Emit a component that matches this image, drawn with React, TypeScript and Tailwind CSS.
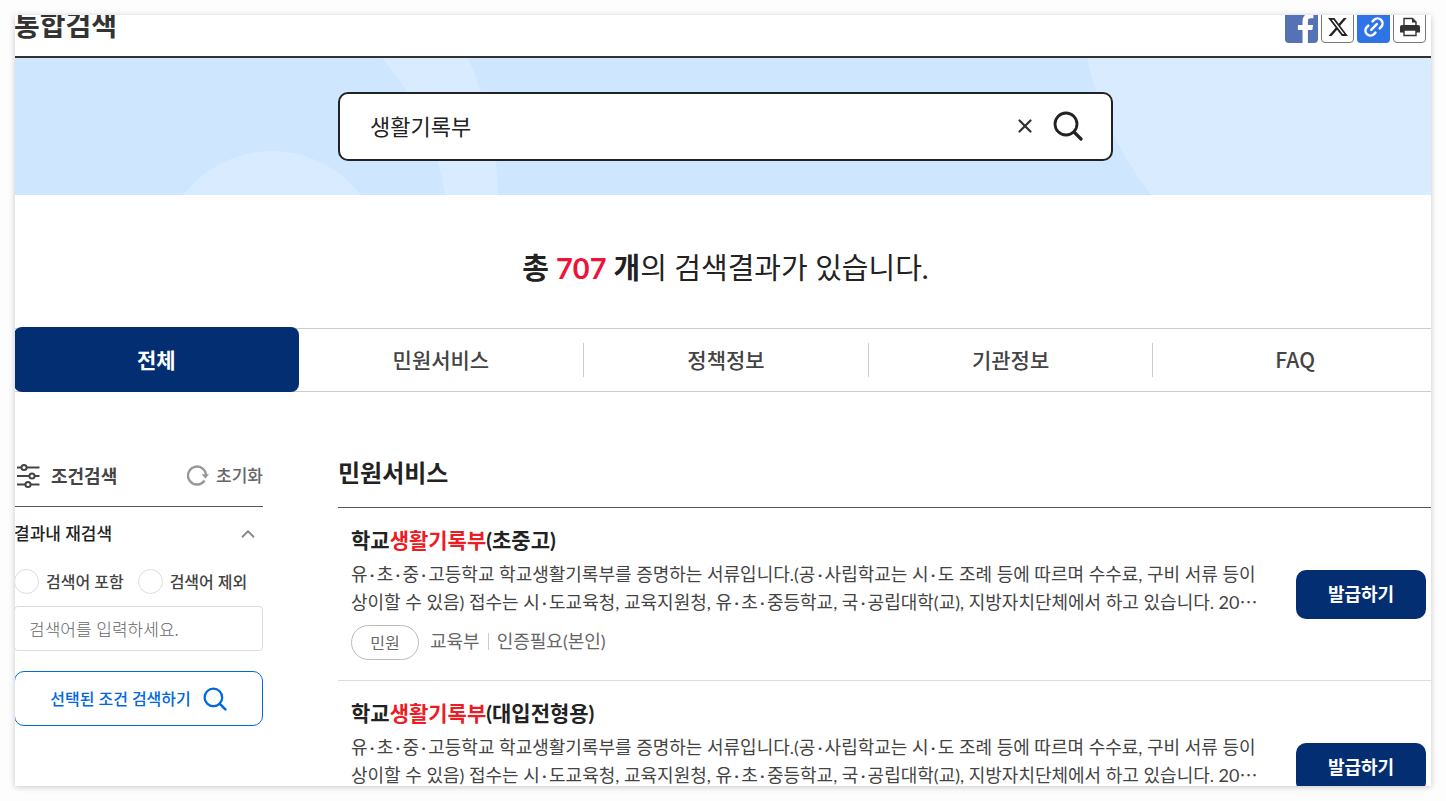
import React, { useState } from 'react';
import { ChevronUp, Link2, X } from 'lucide-react';
import { FaXTwitter } from 'react-icons/fa6';

interface ServiceItem {
  id: string;
  prefix: string;
  keyword: string;
  suffix: string;
  description: string;
  category: string;
  agency: string;
  auth: string;
}

const DESCRIPTION =
  '유·초·중·고등학교 학교생활기록부를 증명하는 서류입니다.(공·사립학교는 시·도 조례 등에 따르며 수수료, 구비 서류 등이 상이할 수 있음) 접수는 시·도교육청, 교육지원청, 유·초·중등학교, 국·공립대학(교), 지방자치단체에서 하고 있습니다. 20⋯';

const SERVICES: ServiceItem[] = [
  {
    id: 'school-record',
    prefix: '학교',
    keyword: '생활기록부',
    suffix: '(초중고)',
    description: DESCRIPTION,
    category: '민원',
    agency: '교육부',
    auth: '인증필요(본인)',
  },
  {
    id: 'school-record-admission',
    prefix: '학교',
    keyword: '생활기록부',
    suffix: '(대입전형용)',
    description: DESCRIPTION,
    category: '민원',
    agency: '교육부',
    auth: '인증필요(본인)',
  },
];

const TABS = ['전체', '민원서비스', '정책정보', '기관정보', 'FAQ'];

// Thin spaces keep listed words apart around a middle dot
const spaceDots = (text: string) => text.replace(/·/g, '\u2009·\u2009');

const SearchIcon = ({ className }: { className: string }) => (
  <svg viewBox="0 0 30 30" fill="none" stroke="currentColor" strokeLinecap="round" className={className} aria-hidden="true">
    <circle cx="13" cy="13" r="11" strokeWidth="2.8" />
    <path d="M21 21l7 7" strokeWidth="3.2" />
  </svg>
);

const FilterIcon = () => (
  <svg viewBox="0 0 24 26" fill="none" stroke="currentColor" strokeWidth="2" className="h-[26px] w-6" aria-hidden="true">
    <path d="M1 4.5h4.500M10.500 4.500H23.500M1 13h12.500M18.500 13H23.500M1 21.500h8.500M14.500 21.500H23.500" />
    <circle cx="8" cy="4.5" r="2.600" />
    <circle cx="16" cy="13" r="2.600" />
    <circle cx="12" cy="21.500" r="2.600" />
  </svg>
);

const ResetIcon = () => (
  <svg viewBox="0 0 22 22" fill="none" className="size-[22px] text-[#999]" aria-hidden="true">
    <path d="M19 10.500A9 9 0 1 0 17.500 15.500" stroke="currentColor" strokeWidth="2.400" />
    <path d="M14.500 9.300h7.500l-3.500 4.400z" fill="currentColor" />
  </svg>
);

const PrinterIcon = () => (
  <svg viewBox="0 0 22 20" className="h-5 w-[22px]" aria-hidden="true">
    <path d="M5 9V1.500h8.500L17 5v4" fill="#fff" stroke="#333" strokeWidth="1.400" />
    <path d="M13 1v4.500h4.500z" fill="#333" />
    <path d="M3 8h16a2 2 0 0 1 2 2v5.500H1V10a2 2 0 0 1 2-2z" fill="#333" />
    <path d="M5 13h12v5.500H5z" fill="#fff" stroke="#333" strokeWidth="1.400" />
  </svg>
);

const ShareButtons = () => (
  <div className="flex gap-[3px]">
    <button type="button" aria-label="페이스북 공유" className="size-[33px] overflow-hidden rounded bg-[#5572b4]">
      <svg viewBox="0 0 32 32" className="size-[33px]" aria-hidden="true">
        <path d="M17 32V19.500H12.500V14.500H17v-3.300c0-5 2.700-8 7-8 1.600 0 2.800.1 3.500.2v4.500h-2.400c-2.300 0-2.900 1.200-2.900 2.900v3.700h5l-.7 5h-4.300V32z" fill="#fff" />
      </svg>
    </button>
    <button type="button" aria-label="X 공유" className="flex size-[33px] items-center justify-center rounded border border-[#777] bg-white">
      <FaXTwitter className="size-[22px] text-[#222]" />
    </button>
    <button type="button" aria-label="링크 복사" className="flex size-[33px] items-center justify-center rounded bg-[#2f74e4] text-white">
      <Link2 className="size-6 -rotate-45" strokeWidth={2.5} />
    </button>
    <button type="button" aria-label="인쇄" className="flex size-[33px] items-center justify-center rounded border border-[#777] bg-white">
      <PrinterIcon />
    </button>
  </div>
);

const SearchBanner = () => {
  const [query, setQuery] = useState('생활기록부');

  return (
    <div className="relative overflow-hidden bg-[#cfe6ff] py-[34px]">
      <svg viewBox="0 0 1423 137" preserveAspectRatio="xMidYMid slice" className="absolute inset-0 size-full" aria-hidden="true">
        <g fill="#d9ebff">
          <circle cx="258" cy="204" r="111" />
          <path d="M368 0A275 275 0 0 1 431 137H484A341 341 0 0 0 454 0z" />
          <circle cx="1396" cy="-68" r="330" />
        </g>
      </svg>
      <form
        onSubmit={(e) => e.preventDefault()}
        className="relative mx-auto flex h-[69px] w-full max-w-[775px] items-center rounded-[10px] border-2 border-[#222] bg-white pr-7 pb-px pl-[30px]"
      >
        <input
          type="text"
          aria-label="검색어"
          value={query}
          onChange={(e) => setQuery(e.target.value)}
          className="min-w-0 flex-1 bg-transparent text-[22px] text-[#222] outline-none"
        />
        <button type="button" aria-label="검색어 지우기" onClick={() => setQuery('')} className="mr-[17px] text-[#333]">
          <X className="size-[22px]" strokeWidth={2.5} />
        </button>
        <button type="submit" aria-label="검색" className="text-[#222]">
          <SearchIcon className="size-[30px]" />
        </button>
      </form>
    </div>
  );
};

const CategoryTabs = () => {
  const [active, setActive] = useState(TABS[0]);

  return (
    <nav className="flex h-16 border-y border-[#ccc] font-['Noto_Sans_CJK_KR',sans-serif] text-[21px]">
      {TABS.map((tab, index) => (
        <button
          key={tab}
          type="button"
          onClick={() => setActive(tab)}
          className={`flex flex-1 items-center ${
            tab === active ? '-mt-0.5 -mb-px rounded-lg bg-[#032e72] font-bold text-white' : 'font-medium text-[#444]'
          }`}
        >
          {tab !== active && index > 1 && <span className="h-[34px] w-px bg-[#ccc]" />}
          <span className="flex-1">{tab}</span>
        </button>
      ))}
    </nav>
  );
};

const FilterPanel = () => (
  <aside className="w-[249px] shrink-0">
    <div className="flex h-[61px] items-center border-b border-[#555] text-[#444]">
      <span className="pl-0.5">
        <FilterIcon />
      </span>
      <h2 className="ml-[11px] flex-1 text-lg font-bold">조건검색</h2>
      <button type="button" className="flex items-center gap-[7px] text-[17px] font-medium text-[#666]">
        <ResetIcon />
        초기화
      </button>
    </div>
    <button type="button" className="flex h-[54px] w-full items-center justify-between pr-1 text-[17px] font-medium text-[#222]">
      결과내 재검색
      <ChevronUp className="size-[22px] text-[#888]" strokeWidth={2} />
    </button>
    <div className="mt-2 flex gap-3.5 text-base font-medium text-[#444]">
      <label className="flex items-center gap-[7px]">
        <input type="radio" name="refine" className="size-[25px] appearance-none rounded-full border border-[#ddd] checked:border-8 checked:border-[#0068e0]" />
        검색어 포함
      </label>
      <label className="flex items-center gap-[7px]">
        <input type="radio" name="refine" className="size-[25px] appearance-none rounded-full border border-[#ddd] checked:border-8 checked:border-[#0068e0]" />
        검색어 제외
      </label>
    </div>
    <input
      type="text"
      aria-label="결과내 검색어"
      placeholder="검색어를 입력하세요."
      className="mt-3 h-[45px] w-full rounded border border-[#ddd] px-3.5 font-['Noto_Sans_CJK_KR',sans-serif] text-[17px] font-light placeholder:text-[#666]"
    />
    <button
      type="button"
      className="mt-5 flex h-[55px] w-full items-center justify-center gap-3 rounded-[10px] border border-[#0068e0] bg-white text-base font-medium text-[#0068e0]"
    >
      선택된 조건 검색하기
      <SearchIcon className="size-6" />
    </button>
  </aside>
);

const ServiceRow: React.FC<{ item: ServiceItem }> = ({ item }) => (
  <li className="flex items-center border-b border-[#ddd] pr-[11px] pl-[13px]">
    <div className="min-w-0 flex-1 pt-[17px] pb-5">
      <h4 className="text-[21px] leading-[30px] font-bold text-[#222]">
        <a href="#">
          {item.prefix}
          <span className="text-[#ed1c24]">{item.keyword}</span>
          {item.suffix}
        </a>
      </h4>
      <p className="mt-[5px] line-clamp-2 text-lg leading-7 break-keep text-[#444]">{spaceDots(item.description)}</p>
      <div className="mt-[9px] flex items-center text-lg text-[#666]">
        <span className="flex h-[35px] w-[68px] items-center justify-center rounded-full border border-[#bbb] text-base">
          {item.category}
        </span>
        <div className="ml-[11px] flex items-center pb-[3px]">
          <span>{item.agency}</span>
          <span className="mx-2 h-[17px] w-px bg-[#ccc]" />
          <span>{item.auth}</span>
        </div>
      </div>
    </div>
    <button type="button" className="ml-9 h-[49px] w-[130px] shrink-0 rounded-[10px] bg-[#032e72] text-lg font-bold text-white">
      발급하기
    </button>
  </li>
);

export default function App() {
  return (
    <div lang="ko" className="h-screen bg-[#fdfdfd] p-[15px] font-['Lato','Noto_Sans_CJK_KR',sans-serif] text-[#222]">
      <div className="h-full overflow-hidden bg-white shadow-[0_1px_6px_rgba(0,0,0,0.22)]">
        <div className="-mt-2 -mr-1.5 -ml-px">
          <header className="flex h-[51px] items-start justify-between border-b-2 border-[#333] pr-[11px]">
            <h1 className="text-[28px] leading-9 font-bold text-[#333]">통합검색</h1>
            <div className="pt-[3px]">
              <ShareButtons />
            </div>
          </header>

          <SearchBanner />

          <p className="pt-[53px] pb-10 text-center text-[29px] leading-10">
            <strong>
              총 <span className="text-[#ee1338]">707</span> 개
            </strong>
            의 검색결과가 있습니다.
          </p>

          <CategoryTabs />

          <div className="flex gap-[75px] pt-[54px]">
            <FilterPanel />
            <main className="min-w-0 flex-1">
              <h3 className="border-b border-[#555] pt-[9px] pb-4 text-2xl leading-9 font-bold">민원서비스</h3>
              <ul>
                {SERVICES.map((item) => (
                  <ServiceRow key={item.id} item={item} />
                ))}
              </ul>
            </main>
          </div>
        </div>
      </div>
    </div>
  );
}
